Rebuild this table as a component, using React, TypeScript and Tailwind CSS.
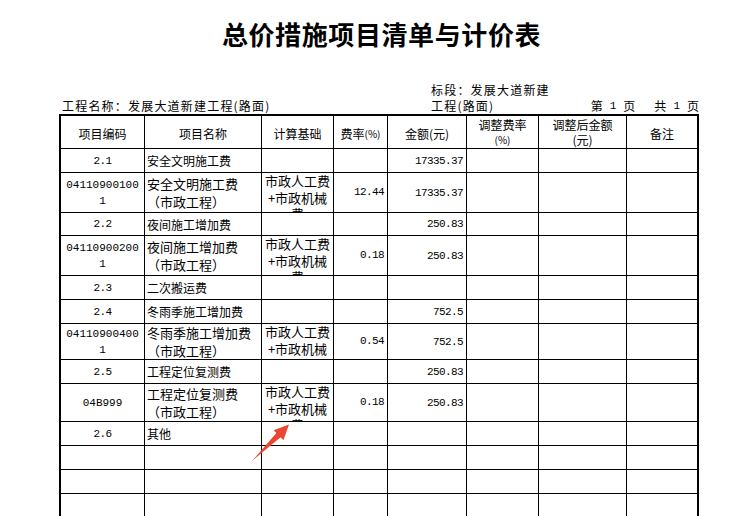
import React from "react";

type Row = {
  h: string;
  code?: string[];
  name?: string[];
  base?: boolean;
  rate?: string;
  amount?: string;
};

const rows: Row[] = [
  { h: "h-[24px]", code: ["2.1"], name: ["安全文明施工费"], amount: "17335.37" },
  { h: "h-[40px]", code: ["04110900100", "1"], name: ["安全文明施工费", "（市政工程）"], base: true, rate: "12.44", amount: "17335.37" },
  { h: "h-[23px]", code: ["2.2"], name: ["夜间施工增加费"], amount: "250.83" },
  { h: "h-[40px]", code: ["04110900200", "1"], name: ["夜间施工增加费", "（市政工程）"], base: true, rate: "0.18", amount: "250.83" },
  { h: "h-[24px]", code: ["2.3"], name: ["二次搬运费"] },
  { h: "h-[24px]", code: ["2.4"], name: ["冬雨季施工增加费"], amount: "752.5" },
  { h: "h-[36px]", code: ["04110900400", "1"], name: ["冬雨季施工增加费", "（市政工程）"], base: true, rate: "0.54", amount: "752.5" },
  { h: "h-[24px]", code: ["2.5"], name: ["工程定位复测费"], amount: "250.83" },
  { h: "h-[38px]", code: ["04B999"], name: ["工程定位复测费", "（市政工程）"], base: true, rate: "0.18", amount: "250.83" },
  { h: "h-[24px]", code: ["2.6"], name: ["其他"] },
  { h: "h-[24px]" },
  { h: "h-[24px]" },
  { h: "h-[24px]" },
];

const mono = "font-['Liberation_Mono',monospace] text-[11px]";
const cell = "shrink-0 border-r border-black overflow-hidden";

function DataRow({ r }: { r: Row }) {
  const long = (r.name?.length ?? 0) > 1;
  return (
    <div className={`flex border-b border-black ${r.h}`}>
      <div className={`${cell} w-[84px] flex flex-col items-center justify-center leading-[16px] ${mono} ${long ? "" : "tracking-[-0.6px]"}`}>
        {r.code?.map((c) => (
          <span key={c}>{c}</span>
        ))}
      </div>
      <div
        className={`${cell} w-[117px] flex flex-col justify-center pl-[2px] ${
          long ? "text-[13px] leading-[18px]" : "text-[12px] leading-[16px] pt-[1px]"
        }`}
      >
        {r.name?.map((n) => (
          <span key={n} className="whitespace-nowrap">
            {n}
          </span>
        ))}
      </div>
      {/* 计算基础: three lines, the last one cut off by the cell like the sheet does */}
      <div className={`${cell} w-[72px] text-center text-[13px] leading-[16.5px]`}>
        {r.base && (
          <>
            <div>市政人工费</div>
            <div>+市政机械</div>
            <div>费</div>
          </>
        )}
      </div>
      <div className={`${cell} w-[54px] flex items-center justify-end pr-[3px] ${mono} tracking-[-0.6px]`}>
        {r.rate}
      </div>
      <div className={`${cell} w-[79px] flex items-center justify-end pr-[3px] pt-[1px] ${mono} tracking-[-0.6px]`}>
        {r.amount}
      </div>
      <div className={`${cell} w-[72px]`} />
      <div className={`${cell} w-[88px]`} />
      <div className="w-[70px] shrink-0" />
    </div>
  );
}

export default function App() {
  return (
    <div className="relative h-[516px] w-[737px] overflow-hidden bg-white font-['Noto_Sans_CJK_SC',sans-serif] text-black">
      <div className="ml-[59px] w-[640px]">
        <h1 className="mt-[21px] h-[26px] pl-[5px] text-center text-[26px] font-bold leading-[26px] tracking-[0.6px]">
          总价措施项目清单与计价表
        </h1>

        <div className="mt-[35px] grid grid-cols-[372px_1fr] text-[12px] leading-[16px] tracking-[1.2px]">
          <div />
          <div>标段：发展大道新建</div>
          <div className="pl-[3px]">工程名称：发展大道新建工程(路面)</div>
          <div className="flex">
            <span>工程(路面)</span>
            <span className="ml-auto flex tracking-normal">
              <span>第</span>
              <span className={`mx-[7px] ${mono}`}>1</span>
              <span>页</span>
              <span className="ml-[19px]">共</span>
              <span className={`mx-[7px] ${mono}`}>1</span>
              <span>页</span>
            </span>
          </div>
        </div>

        <div className="border-2 border-black">
          <div className="flex h-[33px] border-b border-black text-[12px]">
            <div className={`${cell} w-[84px] flex items-center justify-center pt-[3px]`}>项目编码</div>
            <div className={`${cell} w-[117px] flex items-center justify-center pt-[3px]`}>项目名称</div>
            <div className={`${cell} w-[72px] flex items-center justify-center pt-[3px]`}>计算基础</div>
            <div className={`${cell} w-[54px] flex items-center justify-center pt-[3px]`}>
              费率<span className="text-[10px]">(%)</span>
            </div>
            <div className={`${cell} w-[79px] flex items-center justify-center pt-[3px]`}>金额(元)</div>
            <div className={`${cell} w-[72px] flex flex-col items-center justify-center leading-[15px]`}>
              <span>调整费率</span>
              <span className="text-[10px]">(%)</span>
            </div>
            <div className={`${cell} w-[88px] flex flex-col items-center justify-center leading-[15px]`}>
              <span>调整后金额</span>
              <span>(元)</span>
            </div>
            <div className="w-[70px] shrink-0 flex items-center justify-center pt-[3px]">备注</div>
          </div>
          {rows.map((r, i) => (
            <DataRow key={i} r={r} />
          ))}
        </div>
      </div>

      <svg className="pointer-events-none absolute left-0 top-0" width="737" height="516">
        <polygon
          points="252,461 280.6,437.3 283.4,440.2 289,424.5 273.6,430.2 276.4,433.1"
          fill="#ec4632"
        />
      </svg>
    </div>
  );
}
